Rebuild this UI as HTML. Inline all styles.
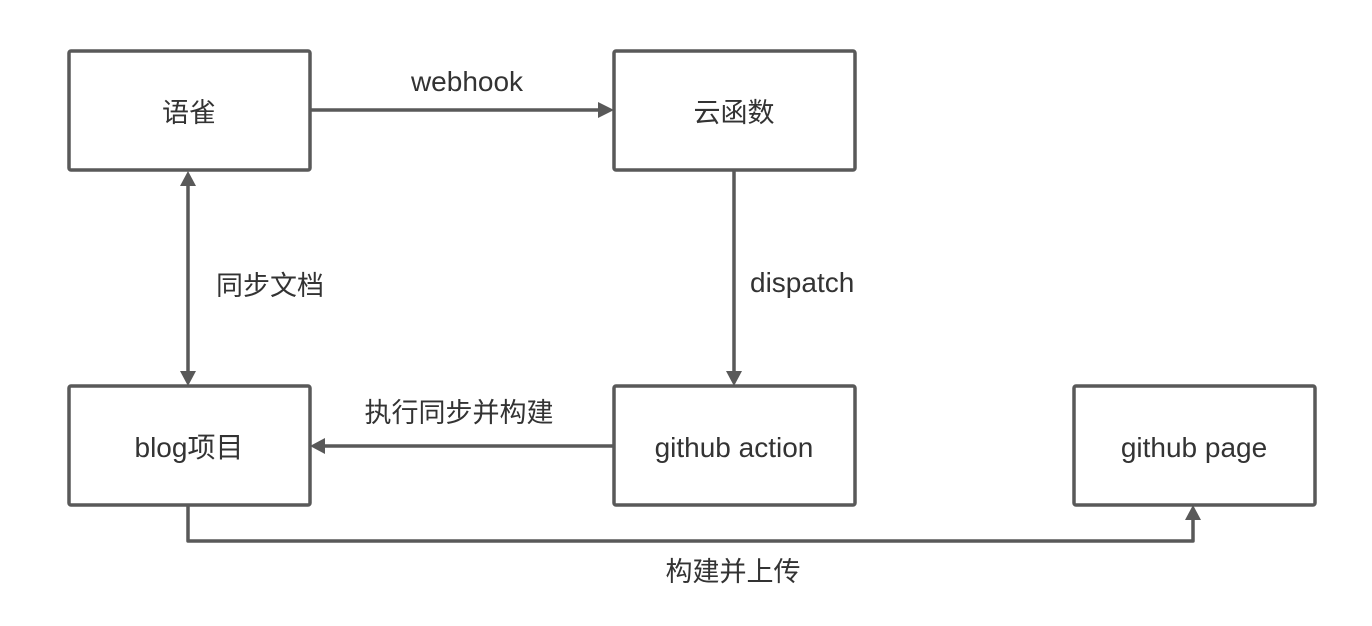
<!DOCTYPE html>
<html><head><meta charset="utf-8"><style>
html,body{margin:0;background:#fff;width:1372px;height:626px;overflow:hidden}
svg text{font-family:"Liberation Sans","Noto Sans CJK SC",sans-serif;font-size:27px;fill:#333}
svg text.l{font-size:28px}
</style></head><body>
<svg width="1372" height="626" viewBox="0 0 1372 626">
<g fill="none" stroke="#595959" stroke-width="3.5" stroke-linejoin="round">
<rect x="69" y="51" width="241" height="119" rx="2"/>
<rect x="614" y="51" width="241" height="119" rx="2"/>
<rect x="69" y="386" width="241" height="119" rx="2"/>
<rect x="614" y="386" width="241" height="119" rx="2"/>
<rect x="1074" y="386" width="241" height="119" rx="2"/>
<line x1="310" y1="110" x2="600" y2="110"/>
<line x1="188" y1="184" x2="188" y2="372"/>
<line x1="734" y1="170" x2="734" y2="372"/>
<line x1="614" y1="446" x2="324" y2="446"/>
<polyline points="188,505 188,541 1193,541 1193,519"/>
</g>
<g fill="#595959">
<polygon points="614,110 598,102 598,118"/>
<polygon points="188,171 180,186 196,186"/>
<polygon points="188,386 180,371 196,371"/>
<polygon points="734,386 726,371 742,371"/>
<polygon points="310,446 325,438 325,454"/>
<polygon points="1193,505 1185,520 1201,520"/>
</g>
<text x="189" y="122" text-anchor="middle">语雀</text>
<text x="734" y="122" text-anchor="middle">云函数</text>
<text class="l" x="189" y="457" text-anchor="middle">blog项目</text>
<text class="l" x="734" y="457" text-anchor="middle">github action</text>
<text class="l" x="1194" y="457" text-anchor="middle">github page</text>
<text class="l" x="467" y="91" text-anchor="middle">webhook</text>
<text x="216" y="295">同步文档</text>
<text class="l" x="750" y="292">dispatch</text>
<text x="459" y="422" text-anchor="middle">执行同步并构建</text>
<text x="733" y="581" text-anchor="middle">构建并上传</text>
</svg>
</body></html>
